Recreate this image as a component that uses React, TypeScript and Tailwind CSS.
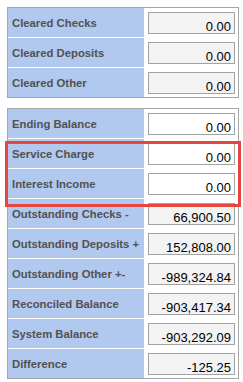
import React from "react";

type Row = { label: string; value: string; editable?: boolean };

const cleared: Row[] = [
  { label: "Cleared Checks", value: "0.00" },
  { label: "Cleared Deposits", value: "0.00" },
  { label: "Cleared Other", value: "0.00" },
];

const balances: Row[] = [
  { label: "Ending Balance", value: "0.00", editable: true },
  { label: "Service Charge", value: "0.00", editable: true },
  { label: "Interest Income", value: "0.00", editable: true },
  { label: "Outstanding Checks -", value: "66,900.50" },
  { label: "Outstanding Deposits +", value: "152,808.00" },
  { label: "Outstanding Other +-", value: "-989,324.84" },
  { label: "Reconciled Balance", value: "-903,417.34" },
  { label: "System Balance", value: "-903,292.09" },
  { label: "Difference", value: "-125.25" },
];

function Table({ rows }: { rows: Row[] }) {
  return (
    <div className="w-[232px] border border-[#a6a6a6] bg-white">
      {rows.map((r, i) => (
        <div
          key={r.label}
          className={`flex h-[29px] ${i > 0 ? "border-t border-white box-content" : ""}`}
        >
          <div className="flex w-[136px] items-center bg-[#b1c8ef] pl-[4px] pt-[1px] text-[11.3px] font-bold text-[#525252]">
            {r.label}
          </div>
          <div className="flex flex-1 items-start pl-[4px] pt-[4px]">
            <div
              className={`flex h-[22px] w-[87px] items-end justify-end border border-[#a3a3a3] pr-[3px] text-[13px] leading-[13px] text-black ${
                r.editable ? "bg-white" : "bg-[#f3f3f3]"
              }`}
            >
              {r.value}
            </div>
          </div>
        </div>
      ))}
    </div>
  );
}

export default function App() {
  return (
    <div
      className="relative h-[382px] w-[243px] bg-white pl-[7px] pt-[7px]"
      style={{ fontFamily: '"Liberation Sans", Arial, sans-serif' }}
    >
      <Table rows={cleared} />
      <div className="mt-[10px]">
        <Table rows={balances} />
      </div>
      <div className="pointer-events-none absolute left-[5px] top-[141px] h-[66px] w-[236px] border-[3px] border-[#e6463f]" />
    </div>
  );
}
